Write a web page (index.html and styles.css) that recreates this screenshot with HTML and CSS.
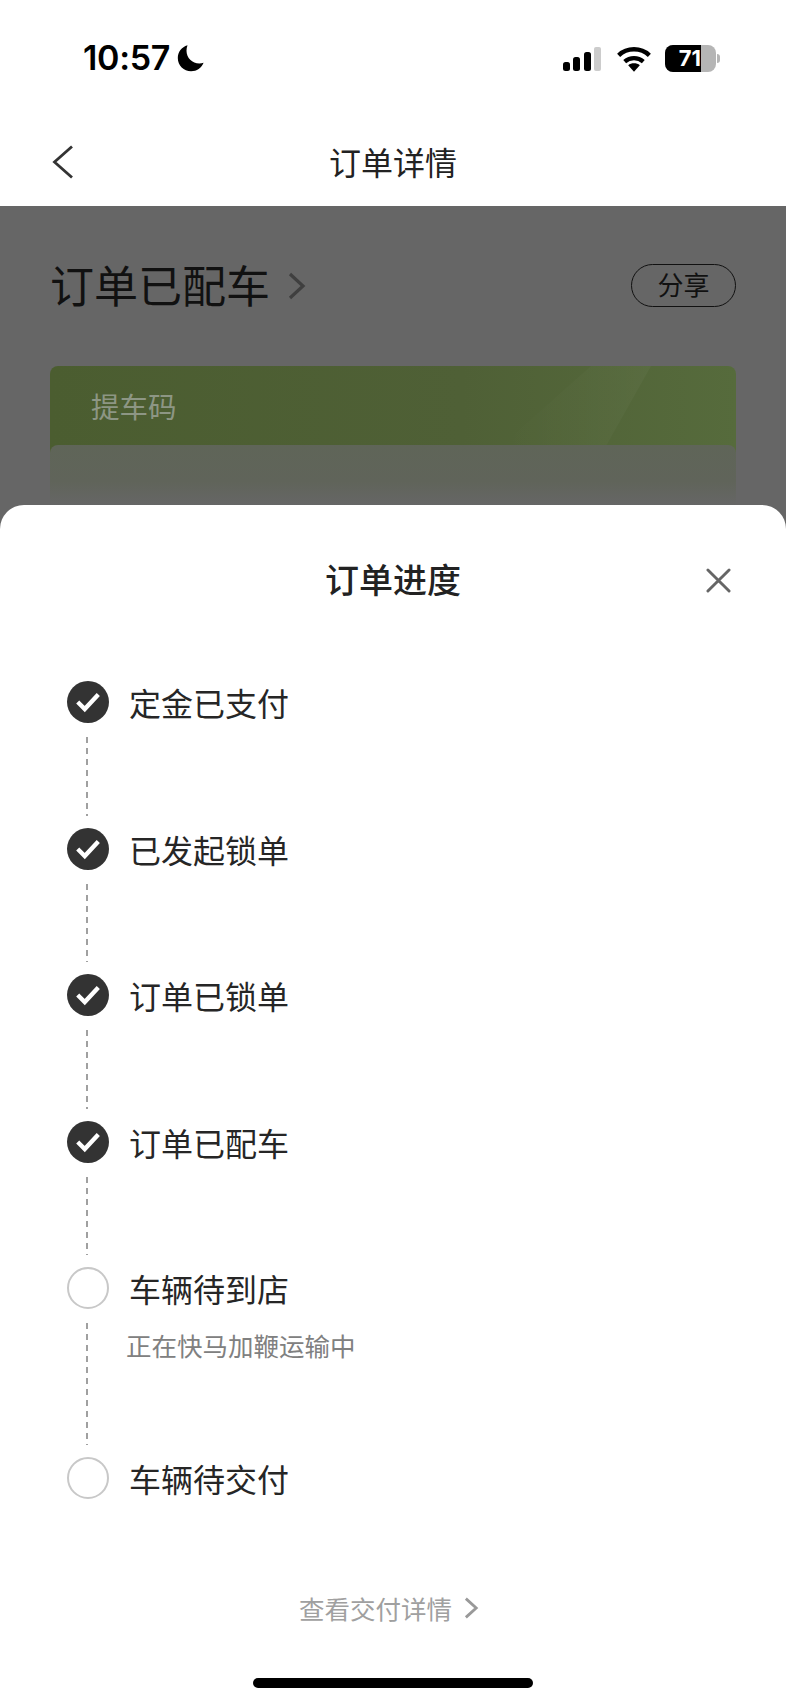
FILE: index.html
```html
<!DOCTYPE html>
<html lang="zh-CN">
<head>
    <meta charset="UTF-8">
    <meta name="viewport" content="width=device-width, initial-scale=1.0">
    <title>订单详情</title>
    <link rel="stylesheet" href="styles.css">
</head>
<body>

<div class="page">
    <div class="status-bar">
        <div class="status-left">
            <span class="time">10:57</span>
            <svg class="moon" viewBox="0 0 28 28"><path d="M10.5 1.2C4.6 3 .8 8 .8 14c0 7.400 6 13.300 13.300 13.300 5.600 0 10.500-3.400 12.500-8.500-1.300.5-2.700.7-4.200.7-7.200 0-12.900-5.700-12.900-12.800 0-1.900.3-3.800 1-5.500z" fill="#000"/></svg>
        </div>
        <div class="status-right">
            <svg class="signal" viewBox="0 0 38 24">
                <rect x="0" y="15" width="7" height="9" rx="2.500" fill="#000"/>
                <rect x="10" y="10" width="7" height="14" rx="2.500" fill="#000"/>
                <rect x="21" y="5" width="7" height="19" rx="2.500" fill="#000"/>
                <rect x="31" y="0" width="7" height="24" rx="2" fill="#ccc"/>
            </svg>
            <svg class="wifi" viewBox="0 0 34 24">
                <path d="M17 24l-5.500-6c3-2.500 8-2.500 11 0z" fill="#000"/>
                <path d="M8.200 14.500C13.200 10 20.800 10 25.800 14.500" fill="none" stroke="#000" stroke-width="4"/>
                <path d="M2.500 8.500C10.500 1 23.500 1 31.500 8.500" fill="none" stroke="#000" stroke-width="4.200"/>
            </svg>
            <div class="battery">
                <div class="battery-body">
                    <div class="battery-fill"><span>71</span></div>
                </div>
                <div class="battery-tip"></div>
            </div>
        </div>
    </div>

    <div class="nav-bar">
        <svg class="back" viewBox="0 0 22 34"><path d="M20 1.500L2.500 17 20 32.500" fill="none" stroke="#333" stroke-width="2.800"/></svg>
        <h1 class="nav-title">订单详情</h1>
    </div>

    <div class="behind">
        <div class="order-head">
            <div class="order-state">
                <span class="state-text">订单已配车</span>
                <svg class="state-arrow" viewBox="0 0 18 28"><path d="M2 2l13 12L2 26" fill="none" stroke="#3f3f3f" stroke-width="3.200"/></svg>
            </div>
            <div class="share">分享</div>
        </div>
        <div class="code-card">
            <div class="code-shine"></div>
            <div class="code-title">提车码</div>
            <div class="code-inner"></div>
        </div>
    </div>

    <div class="sheet">
        <div class="sheet-head">
            <h2 class="sheet-title">订单进度</h2>
            <svg class="close" viewBox="0 0 26 26"><path d="M2 2l22 22M24 2L2 24" fill="none" stroke="#666" stroke-width="3" stroke-linecap="round"/></svg>
        </div>

        <ul class="steps">
            <li class="step done">
                <div class="step-row">
                    <span class="dot"><svg viewBox="0 0 24 20"><path d="M2.500 10L9 16.500 21.500 3" fill="none" stroke="#fff" stroke-width="4"/></svg></span>
                    <span class="step-name">定金已支付</span>
                </div>
                <div class="step-body"><div class="dash"></div></div>
            </li>
            <li class="step done">
                <div class="step-row">
                    <span class="dot"><svg viewBox="0 0 24 20"><path d="M2.500 10L9 16.500 21.500 3" fill="none" stroke="#fff" stroke-width="4"/></svg></span>
                    <span class="step-name">已发起锁单</span>
                </div>
                <div class="step-body"><div class="dash"></div></div>
            </li>
            <li class="step done">
                <div class="step-row">
                    <span class="dot"><svg viewBox="0 0 24 20"><path d="M2.500 10L9 16.500 21.500 3" fill="none" stroke="#fff" stroke-width="4"/></svg></span>
                    <span class="step-name">订单已锁单</span>
                </div>
                <div class="step-body"><div class="dash"></div></div>
            </li>
            <li class="step done">
                <div class="step-row">
                    <span class="dot"><svg viewBox="0 0 24 20"><path d="M2.500 10L9 16.500 21.500 3" fill="none" stroke="#fff" stroke-width="4"/></svg></span>
                    <span class="step-name">订单已配车</span>
                </div>
                <div class="step-body"><div class="dash"></div></div>
            </li>
            <li class="step">
                <div class="step-row">
                    <span class="dot"></span>
                    <span class="step-name">车辆待到店</span>
                </div>
                <div class="step-body tall">
                    <div class="dash"></div>
                    <p class="step-note">正在快马加鞭运输中</p>
                </div>
            </li>
            <li class="step">
                <div class="step-row">
                    <span class="dot"></span>
                    <span class="step-name">车辆待交付</span>
                </div>
            </li>
        </ul>

        <div class="more">
            <span>查看交付详情</span>
            <svg viewBox="0 0 16 24"><path d="M2 2l11 10L2 22" fill="none" stroke="#999" stroke-width="3"/></svg>
        </div>

        <div class="home-bar"></div>
    </div>
</div>

</body>
</html>
```

FILE: styles.css
```css
* {
    box-sizing: border-box;
}

body {
    margin: 0;
    background-color: #fff;
    font-family: "Noto Sans CJK SC", "Noto Sans", sans-serif;
    color: #222;
}

.page {
    width: 786px;
    height: 1704px;
    display: flex;
    flex-direction: column;
    overflow: hidden;
}

/* status bar */
.status-bar {
    height: 116px;
    flex: none;
    padding: 40px 66px 0 83px;
    display: flex;
    justify-content: space-between;
    align-items: flex-start;
}

.status-left {
    display: flex;
    align-items: center;
    gap: 7px;
}

.time {
    font-family: Inter, Roboto, sans-serif;
    font-size: 34px;
    line-height: 36px;
    font-weight: 600;
    letter-spacing: -0.3px;
    color: #000;
}

.moon {
    width: 28px;
    height: 28px;
}

.status-right {
    display: flex;
    align-items: center;
    padding-top: 5px;
}

.signal {
    width: 38px;
    height: 24px;
}

.wifi {
    width: 36px;
    height: 26px;
    margin-left: 15px;
}

.battery {
    display: flex;
    align-items: center;
    margin-left: 13px;
}

.battery-body {
    width: 51px;
    height: 27px;
    border-radius: 8px;
    background-color: #b5b5b5;
    overflow: hidden;
}

.battery-fill {
    width: 36px;
    height: 27px;
    background-color: #000;
    color: #fff;
    font-family: Inter, Roboto, sans-serif;
    font-size: 22px;
    line-height: 27px;
    font-weight: 700;
    text-align: right;
    white-space: nowrap;
}

.battery-tip {
    width: 3px;
    height: 9px;
    margin-left: 1px;
    border-radius: 0 4px 4px 0;
    background-color: #b5b5b5;
}

/* nav */
.nav-bar {
    height: 90px;
    flex: none;
    position: relative;
    display: flex;
    justify-content: center;
    padding-top: 21px;
}

.back {
    position: absolute;
    left: 52px;
    top: 29px;
    width: 22px;
    height: 34px;
}

.nav-title {
    margin: 0;
    font-size: 32px;
    line-height: 48px;
    font-weight: 400;
    color: #222;
}

/* page behind the sheet, dimmed */
.behind {
    height: 323px;
    flex: none;
    background-color: #666;
    padding: 50px 50px 0;
    overflow: hidden;
}

.order-head {
    display: flex;
    justify-content: space-between;
    align-items: center;
}

.order-state {
    display: flex;
    align-items: center;
    gap: 18px;
}

.state-text {
    font-size: 44px;
    line-height: 56px;
    color: #111;
}

.state-arrow {
    width: 18px;
    height: 28px;
    margin-top: 3px;
}

.share {
    width: 105px;
    height: 43px;
    margin-top: 3px;
    border: 1.500px solid #111;
    border-radius: 22px;
    font-size: 26px;
    line-height: 38px;
    text-align: center;
    color: #111;
}

.code-card {
    position: relative;
    height: 200px;
    margin-top: 54px;
    border-radius: 8px;
    background: linear-gradient(90deg, #4b5d30, #4f6036 60%, #566b3c);
    padding: 18px 41px 0;
    overflow: hidden;
}

.code-shine {
    position: absolute;
    top: 0;
    right: 85px;
    width: 150px;
    height: 80px;
    background: linear-gradient(90deg, rgba(255, 255, 255, 0), rgba(255, 255, 255, 0.03));
    clip-path: polygon(60% 0, 100% 0, 70% 100%, 0 100%);
}

.code-title {
    font-size: 28.500px;
    line-height: 44px;
    color: #8d9684;
}

.code-inner {
    position: absolute;
    left: 0;
    right: 0;
    top: 79px;
    height: 121px;
    border-radius: 8px 8px 0 0;
    background: linear-gradient(180deg, #5f6558, #60645a 30%, #666 50%);
}

/* bottom sheet */
.sheet {
    flex: 1;
    position: relative;
    margin-top: -24px;
    background-color: #fff;
    border-radius: 24px 24px 0 0;
    display: flex;
    flex-direction: column;
}

.sheet-head {
    position: relative;
    display: flex;
    justify-content: center;
    padding-top: 49px;
}

.sheet-title {
    margin: 0;
    font-size: 34px;
    line-height: 50px;
    font-weight: 500;
    color: #222;
}

.close {
    position: absolute;
    right: 55px;
    top: 63px;
    width: 25px;
    height: 25px;
}

.steps {
    list-style: none;
    margin: 0;
    padding: 0 0 0 67px;
    margin-top: 77px;
}

.step-row {
    display: flex;
    align-items: center;
    gap: 20px;
    height: 42px;
}

.dot {
    width: 42px;
    height: 42px;
    flex: none;
    border-radius: 50%;
    border: 2.500px solid #c8c8c8;
    display: flex;
    align-items: center;
    justify-content: center;
}

.done .dot {
    border: none;
    background-color: #333;
}

.dot svg {
    width: 26px;
    height: 22px;
}

.step-name {
    font-size: 32px;
    line-height: 42px;
    color: #262626;
}

.step-body {
    height: 104.500px;
    position: relative;
    padding-top: 18px;
}

.step-body.tall {
    height: 148px;
}

.dash {
    position: absolute;
    left: 18.500px;
    top: 14px;
    bottom: 12px;
    width: 2px;
    background: repeating-linear-gradient(180deg, #a0a0a0 0, #a0a0a0 6px, transparent 6px, transparent 11px);
}

.step-note {
    margin: 0 0 0 59px;
    font-size: 25.500px;
    line-height: 36px;
    color: #808080;
}

.more {
    display: flex;
    justify-content: center;
    align-items: center;
    gap: 12px;
    margin-top: 91px;
    padding-right: 8px;
    font-size: 25.500px;
    line-height: 36px;
    color: #a0a0a0;
}

.more svg {
    width: 15px;
    height: 24px;
}

.home-bar {
    position: absolute;
    left: 253px;
    bottom: 16px;
    width: 280px;
    height: 10px;
    border-radius: 5px;
    background-color: #000;
}
```
